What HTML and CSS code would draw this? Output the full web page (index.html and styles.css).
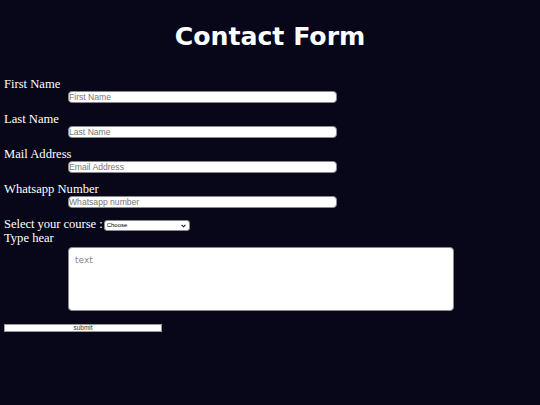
FILE: index.html
```html
<!DOCTYPE html>
<html>
<head>
<meta charset="utf-8">
<title>Contact Form</title>
<link rel="stylesheet" href="styles.css">
</head>
<body>
<h1 class="title">Contact Form</h1>
<form class="form">
  <div class="field">
    <label class="label">First Name</label>
    <input class="input" type="text" placeholder="First Name">
  </div>
  <div class="field">
    <label class="label">Last Name</label>
    <input class="input" type="text" placeholder="Last Name">
  </div>
  <div class="field">
    <label class="label">Mail Address</label>
    <input class="input" type="text" placeholder="Email Address">
  </div>
  <div class="field">
    <label class="label">Whatsapp Number</label>
    <input class="input" type="text" placeholder="Whatsapp number">
  </div>
  <div class="course">
    <span class="label-inline">Select your course :</span>
    <span class="select-wrap">
      <select class="select"><option>Choose</option></select>
      <svg class="chevron" width="5" height="4" viewBox="0 0 5 4"><path d="M0.6 0.8 L2.5 2.8 L4.4 0.8" fill="none" stroke="#111" stroke-width="1.1"/></svg>
    </span>
  </div>
  <div class="label">Type hear</div>
  <textarea class="textarea" placeholder="text"></textarea>
  <button class="submit" type="button">submit</button>
</form>
</body>
</html>
```
FILE: styles.css
```css
html, body {
  margin: 0;
  padding: 0;
  background: #08071a;
}
body {
  padding: 0 4px;
  color: #ffffff;
  font-family: "Liberation Serif", serif;
  font-size: 12.6px;
}
.title {
  margin: 0;
  padding-top: 22px;
  height: 55px;
  box-sizing: border-box;
  text-align: center;
  font-family: "DejaVu Sans", sans-serif;
  font-weight: bold;
  font-size: 25.2px;
  line-height: 30px;
}
.form {
  display: flex;
  flex-direction: column;
  align-items: flex-start;
  padding-top: 22px;
}
.field {
  display: flex;
  flex-direction: column;
  align-items: flex-start;
  margin-bottom: 9px;
}
.label {
  display: block;
  line-height: 14px;
  height: 14px;
}
.input {
  margin: 0 0 0 64px;
  box-sizing: border-box;
  width: 269px;
  height: 12px;
  padding: 0;
  border: 1px solid #8a8a8a;
  border-radius: 4px;
  background: #ffffff;
  font-family: "Liberation Sans", sans-serif;
  font-size: 8.6px;
  outline: none;
}
.input::placeholder {
  color: #777777;
}
.course {
  display: flex;
  align-items: center;
  height: 14px;
  line-height: 14px;
}
.label-inline {
  margin-right: 1px;
  letter-spacing: -0.05px;
}
.select-wrap {
  position: relative;
  display: flex;
  margin-top: 2px;
}
.select {
  appearance: none;
  -webkit-appearance: none;
  box-sizing: border-box;
  width: 86px;
  height: 11px;
  padding: 0 0 0 2px;
  border: 1px solid #8a8a8a;
  border-radius: 3px;
  background: #ffffff;
  color: #000;
  font-family: "Liberation Sans", sans-serif;
  font-size: 6px;
  line-height: 9px;
}
.chevron {
  position: absolute;
  right: 4px;
  top: 4px;
}
.textarea {
  margin: 2px 0 0 64px;
  box-sizing: border-box;
  width: 386px;
  height: 64px;
  padding: 7px 6px;
  border: 1px solid #8a8a8a;
  border-radius: 4px;
  background: #ffffff;
  font-family: "DejaVu Sans", sans-serif;
  font-size: 9px;
  resize: none;
  outline: none;
}
.textarea::placeholder {
  color: #8a8a8a;
}
.submit {
  margin-top: 13px;
  box-sizing: border-box;
  width: 158px;
  height: 8px;
  padding: 0;
  border: 1px solid #9a9a9a;
  background: #ffffff;
  color: #333;
  font-family: "Liberation Sans", sans-serif;
  font-size: 6.5px;
  line-height: 6px;
}
```
